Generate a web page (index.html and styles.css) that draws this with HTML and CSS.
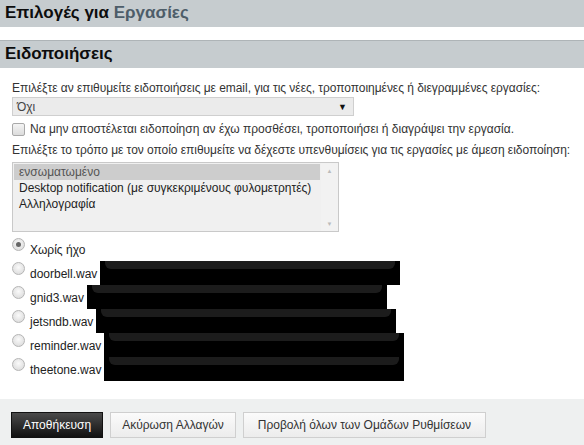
FILE: index.html
```html
<!DOCTYPE html>
<html lang="el">
<head>
<meta charset="utf-8">
<link rel="stylesheet" href="styles.css">
</head>
<body>
<div class="page-title">Επιλογές για <span class="accent">Εργασίες</span></div>
<div class="section-title">Ειδοποιήσεις</div>
<div class="content">
  <div class="label">Επιλέξτε αν επιθυμείτε ειδοποιήσεις με email, για τις νέες, τροποποιημένες ή διεγραμμένες εργασίες:</div>
  <div class="select"><span>Όχι</span><span class="arrow">▼</span></div>
  <div class="check-row"><span class="checkbox"></span><span>Να μην αποστέλεται ειδοποίηση αν έχω προσθέσει, τροποποιήσει ή διαγράψει την εργασία.</span></div>
  <div class="label">Επιλέξτε το τρόπο με τον οποίο επιθυμείτε να δέχεστε υπενθυμίσεις για τις εργασίες με άμεση ειδοποίηση:</div>
  <div class="listbox">
    <div class="items">
      <div class="item selected">ενσωματωμένο</div>
      <div class="item">Desktop notification (με συγκεκριμένους φυλομετρητές)</div>
      <div class="item">Αλληλογραφία</div>
    </div>
    <div class="scrollbar"><span class="up">▲</span><span class="down">▼</span></div>
  </div>
  <div class="radios">
    <div class="radio-row first"><span class="radio checked"></span><span class="rlabel">Χωρίς ήχο</span></div>
    <div class="radio-row"><span class="radio"></span><span class="rlabel">doorbell.wav</span><span class="redact"><span class="bar"></span></span></div>
    <div class="radio-row"><span class="radio"></span><span class="rlabel">gnid3.wav</span><span class="redact"><span class="bar"></span></span></div>
    <div class="radio-row"><span class="radio"></span><span class="rlabel">jetsndb.wav</span><span class="redact"><span class="bar"></span></span></div>
    <div class="radio-row"><span class="radio"></span><span class="rlabel">reminder.wav</span><span class="redact"><span class="bar"></span></span></div>
    <div class="radio-row"><span class="radio"></span><span class="rlabel">theetone.wav</span><span class="redact"><span class="bar"></span></span></div>
  </div>
</div>
<div class="footer">
  <button class="btn primary">Αποθήκευση</button>
  <button class="btn">Ακύρωση Αλλαγών</button>
  <button class="btn wide">Προβολή όλων των Ομάδων Ρυθμίσεων</button>
</div>
</body>
</html>
```
FILE: styles.css
```css
html, body {
  margin: 0;
  padding: 0;
  background: #fff;
  font-family: "Liberation Sans", Arial, sans-serif;
  font-size: 12px;
  color: #333;
}
body {
  height: 445px;
  overflow: hidden;
  display: flex;
  flex-direction: column;
}
.page-title {
  background: #c6cccf;
  height: 27px;
  line-height: 25px;
  padding-left: 5px;
  font-size: 17px;
  font-weight: bold;
  color: #0d0d0d;
  box-sizing: border-box;
}
.accent { color: #4d5d69; }
.section-title {
  margin-top: 13px;
  background: #c6cccf;
  border-top: 1px solid #aeb4b7;
  height: 28px;
  line-height: 26px;
  padding-left: 5px;
  font-size: 17px;
  font-weight: bold;
  color: #0d0d0d;
  box-sizing: border-box;
}
.content {
  padding: 12px 0 0 12px;
  flex: 1;
}
.label {
  line-height: 16px;
  height: 17px;
  white-space: nowrap;
  letter-spacing: -0.04px;
}
.select {
  width: 342px;
  height: 19px;
  box-sizing: border-box;
  border: 1px solid #cfcfcf;
  background: #ebebeb;
  display: flex;
  justify-content: space-between;
  align-items: center;
  padding: 0 6px 0 4px;
  color: #444;
}
.select .arrow { font-size: 9px; color: #111; }
.check-row {
  display: flex;
  align-items: center;
  height: 26px;
  white-space: nowrap;
}
.checkbox {
  width: 11px;
  height: 11px;
  border: 1px solid #a9a9a9;
  border-radius: 2px;
  background: linear-gradient(#f4f4f4, #dcdcdc);
  margin-right: 5px;
}
.listbox {
  margin-top: 3px;
  width: 327px;
  height: 70px;
  box-sizing: border-box;
  border: 1px solid #c9c9c9;
  background: #f0f0f0;
  display: flex;
}
.items {
  flex: 1;
  padding: 1px 1px 0 1px;
}
.item {
  height: 16px;
  line-height: 16px;
  padding-left: 5px;
  color: #222;
  white-space: nowrap;
}
.item.selected {
  background: #cdcdcd;
  color: #555;
}
.scrollbar {
  width: 17px;
  display: flex;
  flex-direction: column;
  justify-content: space-between;
  align-items: center;
  background: #f2f2f2;
  font-size: 6px;
  color: #bbb;
  padding: 5px 0 4px;
  box-sizing: border-box;
}
.radios { margin-top: 5px; }
.radio-row {
  display: flex;
  align-items: flex-start;
  height: 24px;
}
.radio {
  width: 11px;
  height: 11px;
  border-radius: 50%;
  border: 1px solid #b5b5b5;
  background: radial-gradient(circle at 50% 40%, #fafafa, #d6d6d6);
  margin-top: 1px;
  margin-right: 5px;
  position: relative;
  flex: none;
}
.radio.checked::after {
  content: "";
  position: absolute;
  left: 3px;
  top: 3px;
  width: 5px;
  height: 5px;
  border-radius: 50%;
  background: #666;
}
.rlabel {
  padding-top: 6px;
  line-height: 15px;
  color: #222;
}
.redact {
  margin-left: 3px;
  width: 300px;
  height: 24px;
  background: #000;
  display: flex;
  justify-content: center;
  flex: none;
}
.bar {
  width: 290px;
  height: 8px;
  border-radius: 0 0 6px 6px;
  background: #1c1c1c;
}
.footer {
  background: #eef0f0;
  height: 46px;
  display: flex;
  align-items: flex-start;
  gap: 7px;
  padding: 13px 0 0 11px;
  box-sizing: border-box;
}
.btn {
  font-family: "Liberation Sans", Arial, sans-serif;
  font-size: 12px;
  height: 26px;
  border: 1px solid #cfcfcf;
  background: linear-gradient(#fbfbfb, #ececec);
  color: #333;
  padding: 0 11px;
  margin: 0;
}
.btn.wide { padding: 0 14px; }
.btn.primary {
  background: linear-gradient(#4a4a4a, #111);
  border-color: #111;
  color: #fff;
}
```
